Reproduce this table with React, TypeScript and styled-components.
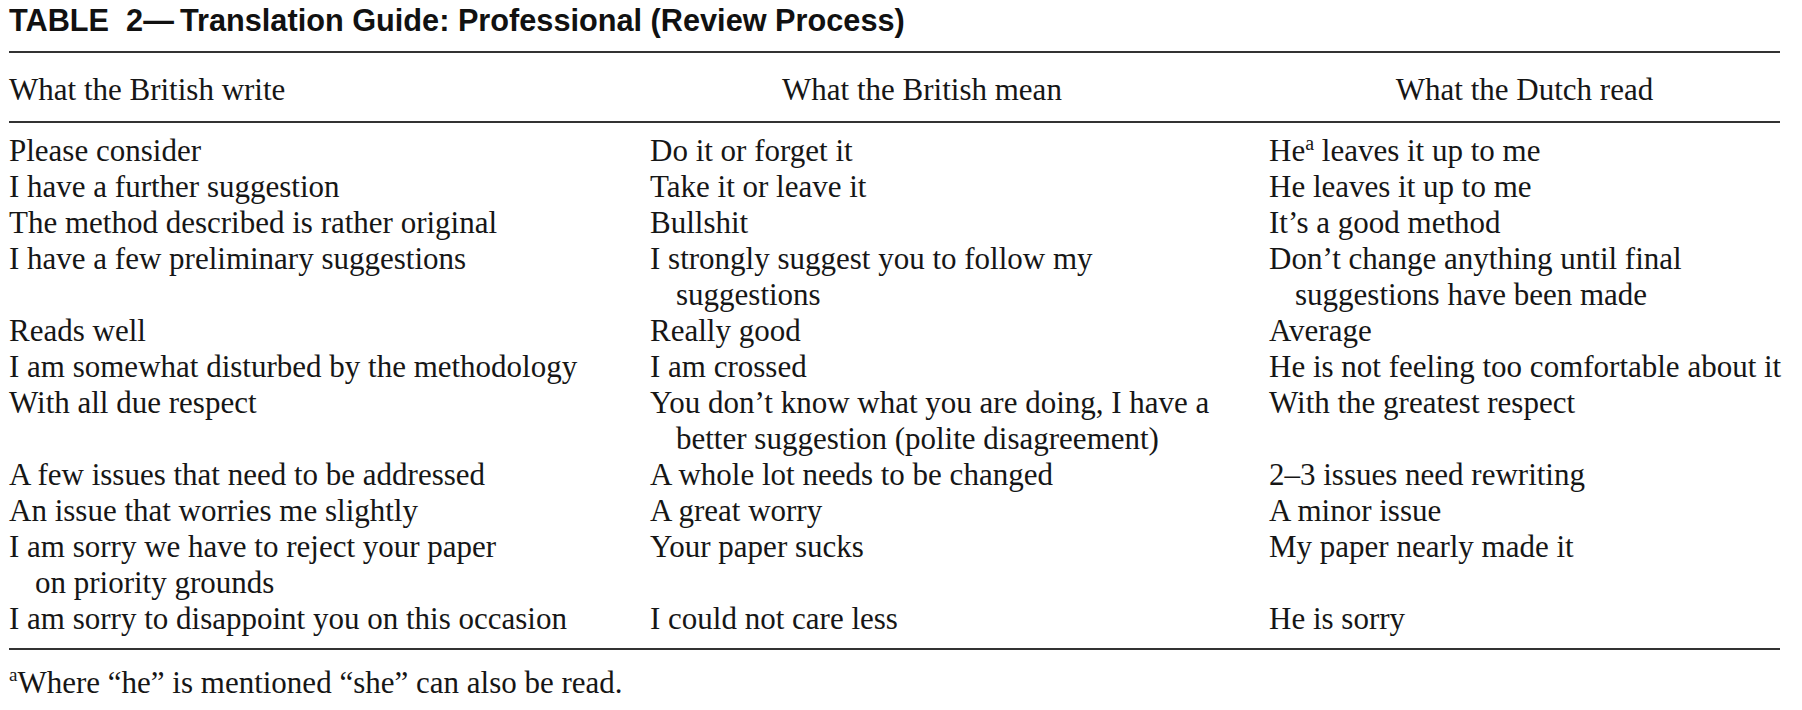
import React from "react";
import styled, { createGlobalStyle } from "styled-components";

const GlobalStyle = createGlobalStyle`
  html, body {
    margin: 0;
    padding: 0;
    background: #ffffff;
  }
  body {
    font-family: "Liberation Serif", "Times New Roman", serif;
    color: #161616;
  }
`;

const Page = styled.div`
  width: 1771px;
  padding: 3px 0 0 9px;
`;

const Title = styled.h1`
  margin: 0 0 12px;
  font-family: "Liberation Sans", Arial, sans-serif;
  font-weight: 700;
  font-size: 30.7px;
  line-height: 36px;
  color: #111;
  white-space: nowrap;
`;

const Table = styled.div`
  border-top: 2px solid #333;
  border-bottom: 2px solid #333;
`;

const Grid = styled.div`
  display: grid;
  grid-template-columns: 566px 544px 511px;
  column-gap: 75px;
  font-size: 31px;
  line-height: 36px;
`;

const HeadRow = styled(Grid)`
  padding: 18.5px 0 13.5px;
  border-bottom: 2px solid #333;
`;

const HeadCell = styled.div<{ $align: "left" | "center" }>`
  text-align: ${(p) => p.$align};
  white-space: nowrap;
`;

const Body = styled(Grid)`
  padding: 9.5px 0 11.5px;
`;

const Cell = styled.div`
  white-space: nowrap;
`;

const Line = styled.div<{ $indent?: boolean }>`
  padding-left: ${(p) => (p.$indent ? "26px" : "0")};
`;

const Sup = styled.span<{ $size: number; $lift: number }>`
  position: relative;
  top: ${(p) => -p.$lift}px;
  font-size: ${(p) => p.$size}px;
  line-height: 0;
`;

const Footnote = styled.p`
  margin: 14.5px 0 0;
  font-size: 31px;
  line-height: 36px;
  white-space: nowrap;
`;

type CellLines = React.ReactNode[];

const rows: CellLines[][] = [
  [
    ["Please consider"],
    ["Do it or forget it"],
    [
      <>
        He<Sup $size={20} $lift={11}>a</Sup> leaves it up to me
      </>,
    ],
  ],
  [["I have a further suggestion"], ["Take it or leave it"], ["He leaves it up to me"]],
  [["The method described is rather original"], ["Bullshit"], ["It\u2019s a good method"]],
  [
    ["I have a few preliminary suggestions"],
    ["I strongly suggest you to follow my", "suggestions"],
    ["Don\u2019t change anything until final", "suggestions have been made"],
  ],
  [["Reads well"], ["Really good"], ["Average"]],
  [
    ["I am somewhat disturbed by the methodology"],
    ["I am crossed"],
    ["He is not feeling too comfortable about it"],
  ],
  [
    ["With all due respect"],
    ["You don\u2019t know what you are doing, I have a", "better suggestion (polite disagreement)"],
    ["With the greatest respect"],
  ],
  [
    ["A few issues that need to be addressed"],
    ["A whole lot needs to be changed"],
    ["2\u20133 issues need rewriting"],
  ],
  [["An issue that worries me slightly"], ["A great worry"], ["A minor issue"]],
  [
    ["I am sorry we have to reject your paper", "on priority grounds"],
    ["Your paper sucks"],
    ["My paper nearly made it"],
  ],
  [
    ["I am sorry to disappoint you on this occasion"],
    ["I could not care less"],
    ["He is sorry"],
  ],
];

export default function App() {
  return (
    <>
      <GlobalStyle />
      <Page>
        <Title>TABLE&nbsp; 2{"\u2014\u2009"}Translation Guide: Professional (Review Process)</Title>
        <Table>
          <HeadRow>
            <HeadCell $align="left">What the British write</HeadCell>
            <HeadCell $align="center">What the British mean</HeadCell>
            <HeadCell $align="center">What the Dutch read</HeadCell>
          </HeadRow>
          <Body>
            {rows.map((row, i) =>
              row.map((lines, j) => (
                <Cell key={`${i}-${j}`}>
                  {lines.map((line, k) => (
                    <Line key={k} $indent={k > 0}>
                      {line}
                    </Line>
                  ))}
                </Cell>
              ))
            )}
          </Body>
        </Table>
        <Footnote>
          <Sup $size={19} $lift={12}>a</Sup>Where {"\u201c"}he{"\u201d"} is mentioned {"\u201c"}she{"\u201d"} can also be read.
        </Footnote>
      </Page>
    </>
  );
}
